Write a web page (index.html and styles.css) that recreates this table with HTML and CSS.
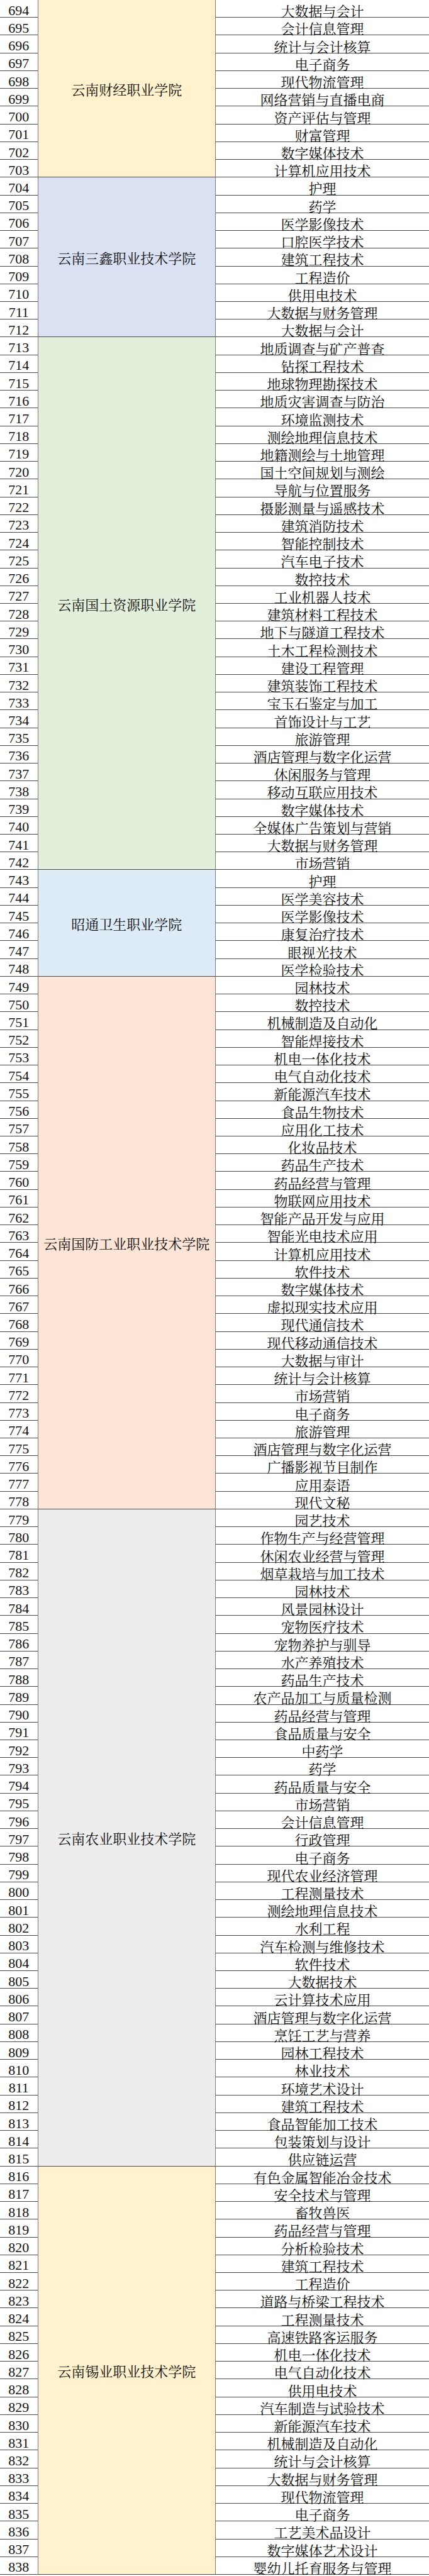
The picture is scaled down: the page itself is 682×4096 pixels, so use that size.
FILE: index.html
```html
<!DOCTYPE html>
<html lang="zh-CN">
<head>
<meta charset="utf-8">
<title>院校专业表</title>
<link rel="stylesheet" href="styles.css">
</head>
<body>
<div class="sheet">

<section class="group c-yellow">
  <div class="nums">
    <div class="cell">694</div><div class="cell">695</div><div class="cell">696</div><div class="cell">697</div><div class="cell">698</div>
    <div class="cell">699</div><div class="cell">700</div><div class="cell">701</div><div class="cell">702</div><div class="cell">703</div>
  </div>
  <div class="school">云南财经职业学院</div>
  <div class="majors">
    <div class="cell">大数据与会计</div>
    <div class="cell">会计信息管理</div>
    <div class="cell">统计与会计核算</div>
    <div class="cell">电子商务</div>
    <div class="cell">现代物流管理</div>
    <div class="cell">网络营销与直播电商</div>
    <div class="cell">资产评估与管理</div>
    <div class="cell">财富管理</div>
    <div class="cell">数字媒体技术</div>
    <div class="cell">计算机应用技术</div>
  </div>
</section>

<section class="group c-lavender">
  <div class="nums">
    <div class="cell">704</div><div class="cell">705</div><div class="cell">706</div><div class="cell">707</div><div class="cell">708</div>
    <div class="cell">709</div><div class="cell">710</div><div class="cell">711</div><div class="cell">712</div>
  </div>
  <div class="school">云南三鑫职业技术学院</div>
  <div class="majors">
    <div class="cell">护理</div>
    <div class="cell">药学</div>
    <div class="cell">医学影像技术</div>
    <div class="cell">口腔医学技术</div>
    <div class="cell">建筑工程技术</div>
    <div class="cell">工程造价</div>
    <div class="cell">供用电技术</div>
    <div class="cell">大数据与财务管理</div>
    <div class="cell">大数据与会计</div>
  </div>
</section>

<section class="group c-green">
  <div class="nums">
    <div class="cell">713</div><div class="cell">714</div><div class="cell">715</div><div class="cell">716</div><div class="cell">717</div>
    <div class="cell">718</div><div class="cell">719</div><div class="cell">720</div><div class="cell">721</div><div class="cell">722</div>
    <div class="cell">723</div><div class="cell">724</div><div class="cell">725</div><div class="cell">726</div><div class="cell">727</div>
    <div class="cell">728</div><div class="cell">729</div><div class="cell">730</div><div class="cell">731</div><div class="cell">732</div>
    <div class="cell">733</div><div class="cell">734</div><div class="cell">735</div><div class="cell">736</div><div class="cell">737</div>
    <div class="cell">738</div><div class="cell">739</div><div class="cell">740</div><div class="cell">741</div><div class="cell">742</div>
  </div>
  <div class="school">云南国土资源职业学院</div>
  <div class="majors">
    <div class="cell">地质调查与矿产普查</div>
    <div class="cell">钻探工程技术</div>
    <div class="cell">地球物理勘探技术</div>
    <div class="cell">地质灾害调查与防治</div>
    <div class="cell">环境监测技术</div>
    <div class="cell">测绘地理信息技术</div>
    <div class="cell">地籍测绘与土地管理</div>
    <div class="cell">国土空间规划与测绘</div>
    <div class="cell">导航与位置服务</div>
    <div class="cell">摄影测量与遥感技术</div>
    <div class="cell">建筑消防技术</div>
    <div class="cell">智能控制技术</div>
    <div class="cell">汽车电子技术</div>
    <div class="cell">数控技术</div>
    <div class="cell">工业机器人技术</div>
    <div class="cell">建筑材料工程技术</div>
    <div class="cell">地下与隧道工程技术</div>
    <div class="cell">土木工程检测技术</div>
    <div class="cell">建设工程管理</div>
    <div class="cell">建筑装饰工程技术</div>
    <div class="cell">宝玉石鉴定与加工</div>
    <div class="cell">首饰设计与工艺</div>
    <div class="cell">旅游管理</div>
    <div class="cell">酒店管理与数字化运营</div>
    <div class="cell">休闲服务与管理</div>
    <div class="cell">移动互联应用技术</div>
    <div class="cell">数字媒体技术</div>
    <div class="cell">全媒体广告策划与营销</div>
    <div class="cell">大数据与财务管理</div>
    <div class="cell">市场营销</div>
  </div>
</section>

<section class="group c-blue">
  <div class="nums">
    <div class="cell">743</div><div class="cell">744</div><div class="cell">745</div><div class="cell">746</div><div class="cell">747</div><div class="cell">748</div>
  </div>
  <div class="school">昭通卫生职业学院</div>
  <div class="majors">
    <div class="cell">护理</div>
    <div class="cell">医学美容技术</div>
    <div class="cell">医学影像技术</div>
    <div class="cell">康复治疗技术</div>
    <div class="cell">眼视光技术</div>
    <div class="cell">医学检验技术</div>
  </div>
</section>

<section class="group c-peach">
  <div class="nums">
    <div class="cell">749</div><div class="cell">750</div><div class="cell">751</div><div class="cell">752</div><div class="cell">753</div>
    <div class="cell">754</div><div class="cell">755</div><div class="cell">756</div><div class="cell">757</div><div class="cell">758</div>
    <div class="cell">759</div><div class="cell">760</div><div class="cell">761</div><div class="cell">762</div><div class="cell">763</div>
    <div class="cell">764</div><div class="cell">765</div><div class="cell">766</div><div class="cell">767</div><div class="cell">768</div>
    <div class="cell">769</div><div class="cell">770</div><div class="cell">771</div><div class="cell">772</div><div class="cell">773</div>
    <div class="cell">774</div><div class="cell">775</div><div class="cell">776</div><div class="cell">777</div><div class="cell">778</div>
  </div>
  <div class="school">云南国防工业职业技术学院</div>
  <div class="majors">
    <div class="cell">园林技术</div>
    <div class="cell">数控技术</div>
    <div class="cell">机械制造及自动化</div>
    <div class="cell">智能焊接技术</div>
    <div class="cell">机电一体化技术</div>
    <div class="cell">电气自动化技术</div>
    <div class="cell">新能源汽车技术</div>
    <div class="cell">食品生物技术</div>
    <div class="cell">应用化工技术</div>
    <div class="cell">化妆品技术</div>
    <div class="cell">药品生产技术</div>
    <div class="cell">药品经营与管理</div>
    <div class="cell">物联网应用技术</div>
    <div class="cell">智能产品开发与应用</div>
    <div class="cell">智能光电技术应用</div>
    <div class="cell">计算机应用技术</div>
    <div class="cell">软件技术</div>
    <div class="cell">数字媒体技术</div>
    <div class="cell">虚拟现实技术应用</div>
    <div class="cell">现代通信技术</div>
    <div class="cell">现代移动通信技术</div>
    <div class="cell">大数据与审计</div>
    <div class="cell">统计与会计核算</div>
    <div class="cell">市场营销</div>
    <div class="cell">电子商务</div>
    <div class="cell">旅游管理</div>
    <div class="cell">酒店管理与数字化运营</div>
    <div class="cell">广播影视节目制作</div>
    <div class="cell">应用泰语</div>
    <div class="cell">现代文秘</div>
  </div>
</section>

<section class="group c-gray">
  <div class="nums">
    <div class="cell">779</div><div class="cell">780</div><div class="cell">781</div><div class="cell">782</div><div class="cell">783</div>
    <div class="cell">784</div><div class="cell">785</div><div class="cell">786</div><div class="cell">787</div><div class="cell">788</div>
    <div class="cell">789</div><div class="cell">790</div><div class="cell">791</div><div class="cell">792</div><div class="cell">793</div>
    <div class="cell">794</div><div class="cell">795</div><div class="cell">796</div><div class="cell">797</div><div class="cell">798</div>
    <div class="cell">799</div><div class="cell">800</div><div class="cell">801</div><div class="cell">802</div><div class="cell">803</div>
    <div class="cell">804</div><div class="cell">805</div><div class="cell">806</div><div class="cell">807</div><div class="cell">808</div>
    <div class="cell">809</div><div class="cell">810</div><div class="cell">811</div><div class="cell">812</div><div class="cell">813</div>
    <div class="cell">814</div><div class="cell">815</div>
  </div>
  <div class="school">云南农业职业技术学院</div>
  <div class="majors">
    <div class="cell">园艺技术</div>
    <div class="cell">作物生产与经营管理</div>
    <div class="cell">休闲农业经营与管理</div>
    <div class="cell">烟草栽培与加工技术</div>
    <div class="cell">园林技术</div>
    <div class="cell">风景园林设计</div>
    <div class="cell">宠物医疗技术</div>
    <div class="cell">宠物养护与驯导</div>
    <div class="cell">水产养殖技术</div>
    <div class="cell">药品生产技术</div>
    <div class="cell">农产品加工与质量检测</div>
    <div class="cell">药品经营与管理</div>
    <div class="cell">食品质量与安全</div>
    <div class="cell">中药学</div>
    <div class="cell">药学</div>
    <div class="cell">药品质量与安全</div>
    <div class="cell">市场营销</div>
    <div class="cell">会计信息管理</div>
    <div class="cell">行政管理</div>
    <div class="cell">电子商务</div>
    <div class="cell">现代农业经济管理</div>
    <div class="cell">工程测量技术</div>
    <div class="cell">测绘地理信息技术</div>
    <div class="cell">水利工程</div>
    <div class="cell">汽车检测与维修技术</div>
    <div class="cell">软件技术</div>
    <div class="cell">大数据技术</div>
    <div class="cell">云计算技术应用</div>
    <div class="cell">酒店管理与数字化运营</div>
    <div class="cell">烹饪工艺与营养</div>
    <div class="cell">园林工程技术</div>
    <div class="cell">林业技术</div>
    <div class="cell">环境艺术设计</div>
    <div class="cell">建筑工程技术</div>
    <div class="cell">食品智能加工技术</div>
    <div class="cell">包装策划与设计</div>
    <div class="cell">供应链运营</div>
  </div>
</section>

<section class="group c-yellow">
  <div class="nums">
    <div class="cell">816</div><div class="cell">817</div><div class="cell">818</div><div class="cell">819</div><div class="cell">820</div>
    <div class="cell">821</div><div class="cell">822</div><div class="cell">823</div><div class="cell">824</div><div class="cell">825</div>
    <div class="cell">826</div><div class="cell">827</div><div class="cell">828</div><div class="cell">829</div><div class="cell">830</div>
    <div class="cell">831</div><div class="cell">832</div><div class="cell">833</div><div class="cell">834</div><div class="cell">835</div>
    <div class="cell">836</div><div class="cell">837</div><div class="cell">838</div>
  </div>
  <div class="school">云南锡业职业技术学院</div>
  <div class="majors">
    <div class="cell">有色金属智能冶金技术</div>
    <div class="cell">安全技术与管理</div>
    <div class="cell">畜牧兽医</div>
    <div class="cell">药品经营与管理</div>
    <div class="cell">分析检验技术</div>
    <div class="cell">建筑工程技术</div>
    <div class="cell">工程造价</div>
    <div class="cell">道路与桥梁工程技术</div>
    <div class="cell">工程测量技术</div>
    <div class="cell">高速铁路客运服务</div>
    <div class="cell">机电一体化技术</div>
    <div class="cell">电气自动化技术</div>
    <div class="cell">供用电技术</div>
    <div class="cell">汽车制造与试验技术</div>
    <div class="cell">新能源汽车技术</div>
    <div class="cell">机械制造及自动化</div>
    <div class="cell">统计与会计核算</div>
    <div class="cell">大数据与财务管理</div>
    <div class="cell">现代物流管理</div>
    <div class="cell">电子商务</div>
    <div class="cell">工艺美术品设计</div>
    <div class="cell">数字媒体艺术设计</div>
    <div class="cell">婴幼儿托育服务与管理</div>
  </div>
</section>

</div>
</body>
</html>
```

FILE: styles.css
```css
html, body {
  margin: 0;
  padding: 0;
  background: #ffffff;
}

.sheet {
  width: 682px;
  font-family: "Liberation Serif", "Noto Serif CJK SC", "Noto Sans CJK SC", serif;
  font-size: 22px;
  color: #111111;
}

.group {
  display: flex;
}

.nums {
  width: 59.5px;
  flex: none;
}

.school {
  width: 283.5px;
  flex: none;
  box-sizing: border-box;
  border-left: 1px solid #7a7a7a;
  border-right: 1px solid #7a7a7a;
  border-bottom: 1px solid #4a4a4a;
  display: flex;
  align-items: center;
  justify-content: center;
  padding-top: 2px;
  white-space: nowrap;
}

.majors {
  flex: 1;
  min-width: 0;
}

.cell {
  height: calc(4096px / 145);
  box-sizing: border-box;
  border-bottom: 1px solid #4a4a4a;
  display: flex;
  align-items: center;
  justify-content: center;
  padding-top: 6px;
  white-space: nowrap;
  background: #ffffff;
}

.c-yellow .school { background: #fff2cc; }
.c-lavender .school { background: #d9e1f2; }
.c-green .school { background: #e2efda; }
.c-blue .school { background: #ddebf7; }
.c-peach .school { background: #fce4d6; }
.c-gray .school { background: #ededed; }
```
